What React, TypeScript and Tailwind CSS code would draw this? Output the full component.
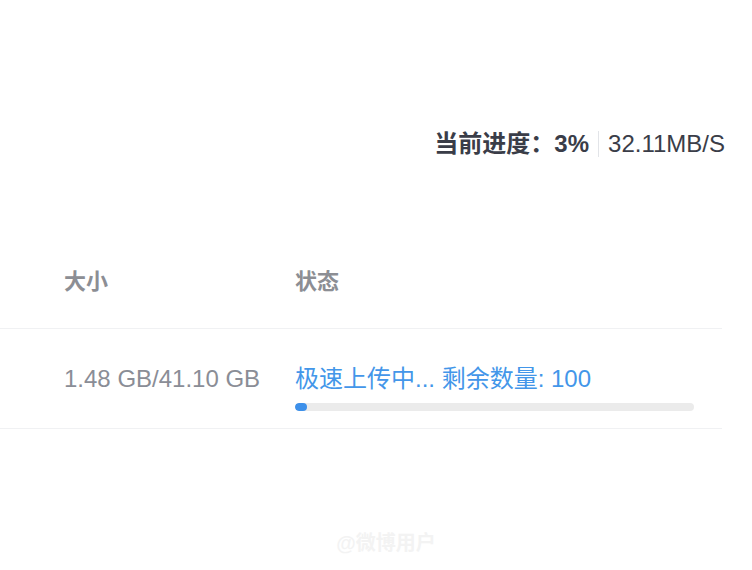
import React from 'react';

const font = { fontFamily: '"Liberation Sans", "Noto Sans CJK SC", sans-serif' };

const App: React.FC = () => {
  const progress = 3;

  return (
    <div className="w-[752px] h-[570px] bg-white overflow-hidden flex flex-col" style={font}>
      {/* Top speed summary */}
      <div className="h-[128px] shrink-0" />
      <div className="flex justify-end items-center pr-[27px] h-[32px] text-[24px] text-[#3a3d48] leading-none">
        <span className="font-bold">当前进度：</span>
        <span className="font-bold">3%</span>
        <span className="w-px h-[26px] bg-[#e2e4e8] mx-[9px]" />
        <span>32.11MB/S</span>
      </div>

      {/* Table */}
      <div className="mt-[96px] w-[722px]">
        <div className="flex items-start h-[73px] pt-[12px] text-[22px] leading-[28px] font-bold text-[#8c8e94] border-b border-[#f0f1f3]">
          <div className="w-[295px] pl-[64px]">大小</div>
          <div>状态</div>
        </div>
        <div className="flex items-start h-[100px] border-b border-[#f0f1f3]">
          <div className="w-[295px] pl-[64px] pt-[35px] text-[24px] text-[#8a8d96] leading-[30px]">
            1.48 GB/41.10 GB
          </div>
          <div className="pt-[35px] flex flex-col">
            <div className="text-[24px] text-[#4396e9] leading-[30px]">
              极速上传中... 剩余数量: 100
            </div>
            <div className="mt-[9px] w-[399px] h-[8px] rounded-full bg-[#ebebeb] overflow-hidden">
              <div
                className="h-full rounded-full bg-[#3d90ea] min-w-[11px]"
                style={{ width: `${progress}%` }}
              />
            </div>
          </div>
        </div>
      </div>

      {/* faint watermark */}
      <div className="mt-auto mb-[12px] self-center ml-[20px] text-[20px] text-[#f3f3f3] font-bold">
        @微博用户
      </div>
    </div>
  );
};

export default App;
